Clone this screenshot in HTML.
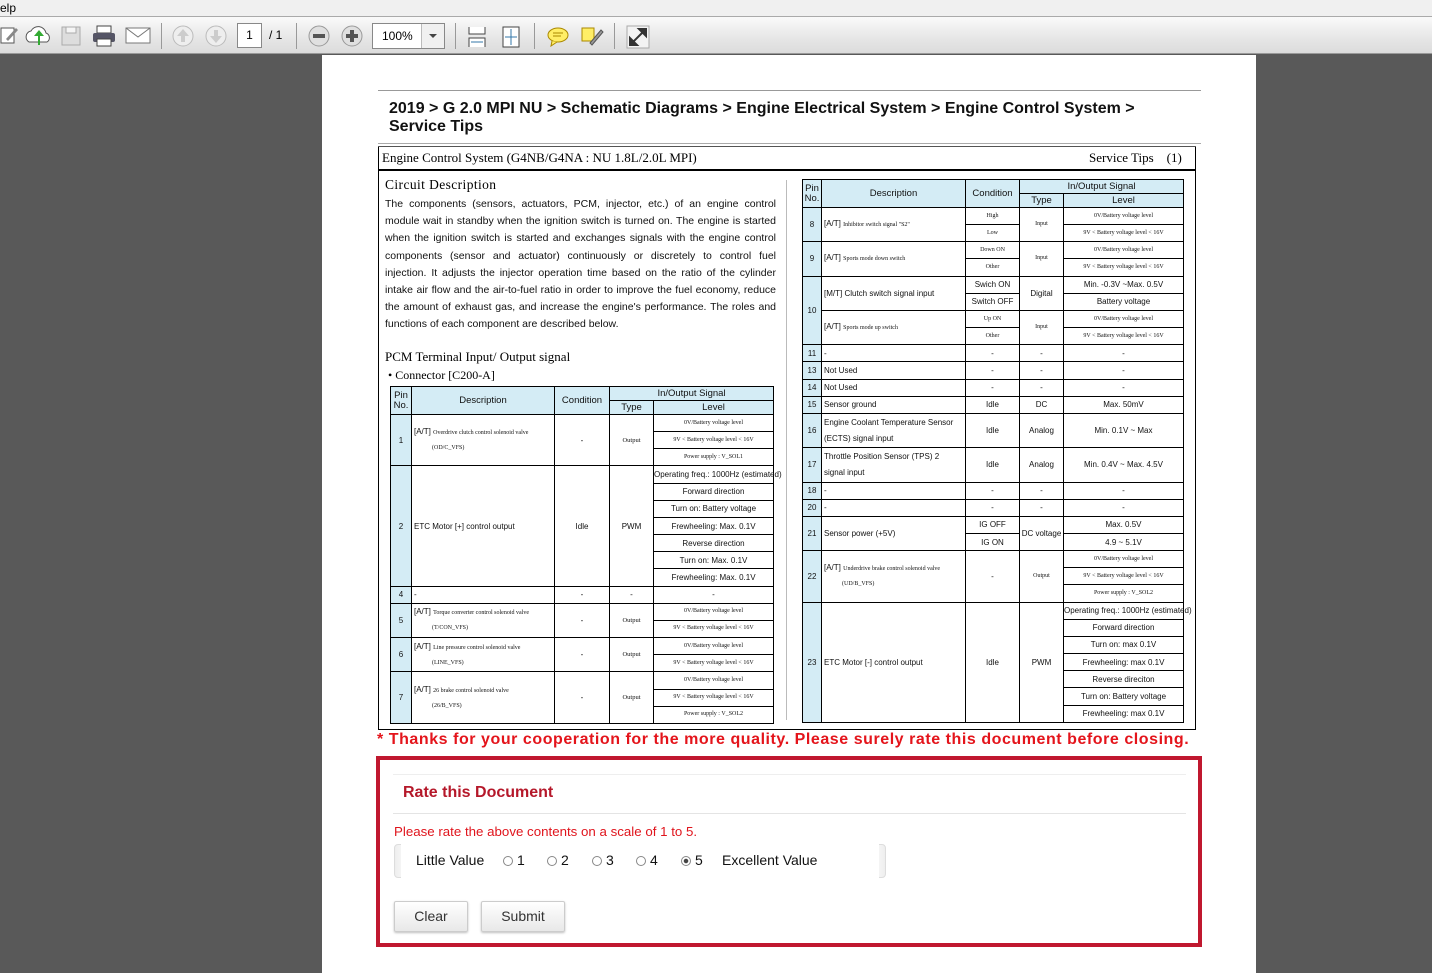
<!DOCTYPE html>
<html><head><meta charset="utf-8"><style>
*{box-sizing:border-box;margin:0;padding:0}
body{width:1432px;height:973px;overflow:hidden;background:#595959;font-family:"Liberation Sans",sans-serif;position:relative}
.menu{position:absolute;left:0;top:0;width:1432px;height:17px;background:#f0f0f0;font-size:12px;line-height:16px;border-bottom:1px solid #aaa}
.tb{position:absolute;left:0;top:17px;width:1432px;height:37px;background:linear-gradient(#fafafa,#e6e6e6 60%,#dcdcdc);border-bottom:1px solid #999}
.ic{position:absolute;top:8px}
.sep{position:absolute;top:6px;width:1px;height:26px;background:#999}
.page{position:absolute;left:322px;top:55px;width:934px;height:918px;background:#fff}
.abs{position:absolute}
table{border-collapse:collapse;table-layout:fixed;position:absolute}
td{border:1px solid #000;text-align:center;vertical-align:middle;font-size:8px;color:#111;overflow:visible;white-space:nowrap;padding:0;line-height:9px}
tr{height:17.17px}
tr.h{height:14px}
td.hd{background:#d4ecf5;font-size:9.5px}
td.p{background:#d4ecf5}
td.l{text-align:left;padding-left:2px}
td.two{line-height:14px}
.s{font-family:"Liberation Serif",serif;font-size:6.5px}
.sd{font-family:"Liberation Serif",serif;font-size:6px}
.btn{position:absolute;top:141px;height:31px;border:1px solid #ccc;border-radius:2px;background:linear-gradient(#fff,#e8e8e8);box-shadow:0 1px 2px rgba(0,0,0,.25);font-size:14px;line-height:29px;text-align:center;color:#333}
.rad{position:absolute;top:99px;width:10px;height:10px;border:1px solid #888;border-radius:50%;background:#fff}
.rl{position:absolute;top:94px;font-size:14px;color:#111;line-height:18px;white-space:nowrap}
</style></head><body>
<div class="menu">elp</div>
<div class="tb">
 <svg class="ic" style="left:0" width="18" height="20"><rect x="1" y="3" width="13" height="15" fill="#fff" stroke="#555"/><path d="M6 14 L16 3 L18 5 L8 16Z" fill="#888"/></svg>
 <svg class="ic" style="left:25" width="26" height="22"><path d="M4 17 a6 6 0 0 1 2-11 a8 8 0 0 1 15 2 a5 5 0 0 1 1 9z" fill="#fff" stroke="#555"/><path d="M13 20 V11 H9 L14 5 L19 11 H15 V20z" fill="#3a3"/></svg>
 <svg class="ic" style="left:60" width="22" height="22"><rect x="2" y="2" width="18" height="18" fill="#ddd" stroke="#aaa"/><rect x="6" y="2" width="10" height="6" fill="#f5f5f5" stroke="#aaa"/></svg>
 <svg class="ic" style="left:92" width="24" height="22"><rect x="5" y="1" width="14" height="7" fill="#fff" stroke="#444"/><rect x="1" y="8" width="22" height="9" rx="2" fill="#556"/><rect x="5" y="14" width="14" height="7" fill="#fff" stroke="#444"/></svg>
 <svg class="ic" style="left:125" width="26" height="20"><rect x="1" y="3" width="24" height="15" fill="#fff" stroke="#777"/><path d="M1 3 L13 12 L25 3" fill="none" stroke="#777"/></svg>
 <div class="sep" style="left:161px"></div>
 <svg class="ic" style="left:171" width="24" height="24"><circle cx="12" cy="11" r="10" fill="#eee" stroke="#bbb"/><path d="M12 4 L18 11 H14 V17 H10 V11 H6Z" fill="#ccc"/></svg>
 <svg class="ic" style="left:204" width="24" height="24"><circle cx="12" cy="11" r="10" fill="#eee" stroke="#bbb"/><path d="M12 18 L18 11 H14 V5 H10 V11 H6Z" fill="#ccc"/></svg>
 <div class="abs" style="left:237px;top:6px;width:25px;height:25px;background:#fff;border:1px solid #888;font-size:12px;line-height:23px;text-align:center">1</div>
 <div class="abs" style="left:269px;top:11px;font-size:12px">/ 1</div>
 <div class="sep" style="left:296px"></div>
 <svg class="ic" style="left:307" width="24" height="24"><circle cx="12" cy="11" r="10" fill="#e0e0e0" stroke="#999"/><rect x="6" y="9" width="12" height="4" fill="#555"/></svg>
 <svg class="ic" style="left:340" width="24" height="24"><circle cx="12" cy="11" r="10" fill="#e0e0e0" stroke="#999"/><rect x="6" y="9" width="12" height="4" fill="#555"/><rect x="10" y="5" width="4" height="12" fill="#555"/></svg>
 <div class="abs" style="left:372px;top:6px;width:73px;height:26px;background:#fff;border:1px solid #888;font-size:12px;line-height:24px;padding-left:9px">100%</div>
 <div class="abs" style="left:421px;top:7px;width:23px;height:24px;border-left:1px solid #bbb;background:#f0f0f0"><div style="margin:10px 7px;width:0;height:0;border-left:4px solid transparent;border-right:4px solid transparent;border-top:4px solid #444"></div></div>
 <div class="sep" style="left:455px"></div>
 <svg class="ic" style="left:467" width="20" height="24"><path d="M2 2 V9 H18 V2 M2 22 V13 H18 V22" fill="#fff" stroke="#444"/><path d="M4 17 H16" stroke="#37a"/></svg>
 <svg class="ic" style="left:501" width="20" height="24"><rect x="2" y="2" width="16" height="20" fill="#fff" stroke="#444"/><path d="M10 4 V20 M4 12 H16" stroke="#37a"/></svg>
 <div class="sep" style="left:534px"></div>
 <svg class="ic" style="left:546" width="24" height="22"><ellipse cx="12" cy="10" rx="10" ry="7" fill="#fe6" stroke="#a80"/><path d="M6 16 L5 21 L11 17" fill="#fe6" stroke="#a80"/><path d="M7 8 H17 M7 11 H15" stroke="#a80"/></svg>
 <svg class="ic" style="left:580" width="24" height="22"><rect x="2" y="3" width="12" height="13" fill="#fe6" stroke="#a80"/><path d="M10 18 L21 5 L23 7 L12 20Z" fill="#999" stroke="#555"/></svg>
 <div class="sep" style="left:614px"></div>
 <svg class="ic" style="left:626" width="24" height="24"><rect x="1" y="1" width="22" height="22" fill="#f3f3f3" stroke="#aaa"/><path d="M13 4 H20 V11 Z M11 20 H4 V13Z M8 16 L16 8" fill="#333" stroke="#333" stroke-width="2"/></svg>
</div>

<div class="page"></div>
<div class="abs" style="left:378px;top:90px;width:823px;height:1px;background:#999"></div>
<div class="abs" style="left:389px;top:100px;font-size:16px;font-weight:bold;line-height:18px;color:#111">2019 &gt; G 2.0 MPI NU &gt; Schematic Diagrams &gt; Engine Electrical System &gt; Engine Control System &gt;<br>Service Tips</div>
<div class="abs" style="left:378px;top:143px;width:823px;height:1px;background:#aaa"></div>

<div class="abs" style="left:378px;top:146px;width:818px;height:584px;border:1px solid #000;border-top:none"></div>
<div class="abs" style="left:378px;top:146px;width:818px;height:1px;background:#555"></div>
<div class="abs" style="left:382px;top:150px;font-family:'Liberation Serif',serif;font-size:13px">Engine Control System (G4NB/G4NA : NU 1.8L/2.0L MPI)</div>
<div class="abs" style="left:1089px;top:150px;font-family:'Liberation Serif',serif;font-size:13px">Service Tips&nbsp;&nbsp;&nbsp;&nbsp;(1)</div>
<div class="abs" style="left:378px;top:169px;width:818px;height:2px;background:#000"></div>
<div class="abs" style="left:786px;top:180px;width:1px;height:540px;background:#bbb"></div>

<div class="abs" style="left:385px;top:177px;font-family:'Liberation Serif',serif;font-size:13.5px;letter-spacing:.4px">Circuit Description</div>
<div class="abs" style="left:385px;top:196px;width:391px;font-size:10.5px;line-height:17.2px;text-align:justify;color:#111">The components (sensors, actuators, PCM, injector, etc.) of an engine control module wait in standby when the ignition switch is turned on. The engine is started when the ignition switch is started and exchanges signals with the engine control components (sensor and actuator) continuously or discretely to control fuel injection. It adjusts the injector operation time based on the ratio of the cylinder intake air flow and the air-to-fuel ratio in order to improve the fuel economy, reduce the amount of exhaust gas, and increase the engine's performance. The roles and functions of each component are described below.</div>
<div class="abs" style="left:385px;top:349px;font-family:'Liberation Serif',serif;font-size:13px">PCM Terminal Input/ Output signal</div>
<div class="abs" style="left:388px;top:368px;font-family:'Liberation Serif',serif;font-size:12px">• Connector [C200-A]</div>

<table style="left:390px;top:386px;width:383px">
<colgroup><col style="width:21px"><col style="width:143px"><col style="width:55px"><col style="width:44px"><col style="width:120px"></colgroup>
<tr class="h"><td class="hd" rowspan="2" style="line-height:10px">Pin<br>No.</td><td class="hd" rowspan="2">Description</td><td class="hd" rowspan="2">Condition</td><td class="hd" colspan="2">In/Output Signal</td></tr>
<tr class="h"><td class="hd">Type</td><td class="hd">Level</td></tr>
<tr><td class="p" rowspan="3">1</td><td class="l two" rowspan="3">[A/T] <span class="sd">Overdrive clutch control solenoid valve</span><br><span class="sd" style="padding-left:18px">(OD/C_VFS)</span></td><td rowspan="3">-</td><td rowspan="3" class="s">Output</td><td class="sd">0V/Battery voltage level</td></tr>
<tr><td class="sd">9V &lt; Battery voltage level &lt; 16V</td></tr>
<tr><td class="sd">Power supply : V_SOL1</td></tr>
<tr><td class="p" rowspan="7">2</td><td class="l" rowspan="7">ETC Motor [+] control output</td><td rowspan="7">Idle</td><td rowspan="7">PWM</td><td>Operating freq.: 1000Hz (estimated)</td></tr>
<tr><td>Forward direction</td></tr><tr><td>Turn on: Battery voltage</td></tr><tr><td>Frewheeling: Max. 0.1V</td></tr><tr><td>Reverse direction</td></tr><tr><td>Turn on: Max. 0.1V</td></tr><tr><td>Frewheeling: Max. 0.1V</td></tr>
<tr><td class="p">4</td><td class="l">-</td><td>-</td><td>-</td><td>-</td></tr>
<tr><td class="p" rowspan="2">5</td><td class="l two" rowspan="2">[A/T] <span class="sd">Torque converter control solenoid valve</span><br><span class="sd" style="padding-left:18px">(T/CON_VFS)</span></td><td rowspan="2">-</td><td rowspan="2" class="s">Output</td><td class="sd">0V/Battery voltage level</td></tr>
<tr><td class="sd">9V &lt; Battery voltage level &lt; 16V</td></tr>
<tr><td class="p" rowspan="2">6</td><td class="l two" rowspan="2">[A/T] <span class="sd">Line pressure control solenoid valve</span><br><span class="sd" style="padding-left:18px">(LINE_VFS)</span></td><td rowspan="2">-</td><td rowspan="2" class="s">Output</td><td class="sd">0V/Battery voltage level</td></tr>
<tr><td class="sd">9V &lt; Battery voltage level &lt; 16V</td></tr>
<tr><td class="p" rowspan="3">7</td><td class="l two" rowspan="3">[A/T] <span class="sd">26 brake control solenoid valve</span><br><span class="sd" style="padding-left:18px">(26/B_VFS)</span></td><td rowspan="3">-</td><td rowspan="3" class="s">Output</td><td class="sd">0V/Battery voltage level</td></tr>
<tr><td class="sd">9V &lt; Battery voltage level &lt; 16V</td></tr>
<tr><td class="sd">Power supply : V_SOL2</td></tr>
</table>

<table style="left:802px;top:179px;width:381px">
<colgroup><col style="width:19px"><col style="width:144px"><col style="width:54px"><col style="width:44px"><col style="width:120px"></colgroup>
<tr class="h"><td class="hd" rowspan="2" style="line-height:10px">Pin<br>No.</td><td class="hd" rowspan="2">Description</td><td class="hd" rowspan="2">Condition</td><td class="hd" colspan="2">In/Output Signal</td></tr>
<tr class="h"><td class="hd">Type</td><td class="hd">Level</td></tr>
<tr><td class="p" rowspan="2">8</td><td class="l" rowspan="2">[A/T] <span class="sd">Inhibitor switch signal "S2"</span></td><td class="sd">High</td><td rowspan="2" class="sd">Input</td><td class="sd">0V/Battery voltage level</td></tr>
<tr><td class="sd">Low</td><td class="sd">9V &lt; Battery voltage level &lt; 16V</td></tr>
<tr><td class="p" rowspan="2">9</td><td class="l" rowspan="2">[A/T] <span class="sd">Sports mode down switch</span></td><td class="sd">Down ON</td><td rowspan="2" class="sd">Input</td><td class="sd">0V/Battery voltage level</td></tr>
<tr><td class="sd">Other</td><td class="sd">9V &lt; Battery voltage level &lt; 16V</td></tr>
<tr><td class="p" rowspan="4">10</td><td class="l" rowspan="2">[M/T] Clutch switch signal input</td><td>Swich ON</td><td rowspan="2">Digital</td><td>Min. -0.3V ~Max. 0.5V</td></tr>
<tr><td>Switch OFF</td><td>Battery voltage</td></tr>
<tr><td class="l" rowspan="2">[A/T] <span class="sd">Sports mode up switch</span></td><td class="sd">Up ON</td><td rowspan="2" class="sd">Input</td><td class="sd">0V/Battery voltage level</td></tr>
<tr><td class="sd">Other</td><td class="sd">9V &lt; Battery voltage level &lt; 16V</td></tr>
<tr><td class="p">11</td><td class="l">-</td><td>-</td><td>-</td><td>-</td></tr>
<tr><td class="p">13</td><td class="l">Not Used</td><td>-</td><td>-</td><td>-</td></tr>
<tr><td class="p">14</td><td class="l">Not Used</td><td>-</td><td>-</td><td>-</td></tr>
<tr><td class="p">15</td><td class="l">Sensor ground</td><td>Idle</td><td>DC</td><td>Max. 50mV</td></tr>
<tr><td class="p" rowspan="2">16</td><td class="l two" rowspan="2" style="line-height:16px">Engine Coolant Temperature Sensor<br>(ECTS) signal input</td><td rowspan="2">Idle</td><td rowspan="2">Analog</td><td rowspan="2">Min. 0.1V ~ Max</td></tr><tr></tr>
<tr><td class="p" rowspan="2">17</td><td class="l two" rowspan="2" style="line-height:16px">Throttle Position Sensor (TPS) 2<br>signal input</td><td rowspan="2">Idle</td><td rowspan="2">Analog</td><td rowspan="2">Min. 0.4V ~ Max. 4.5V</td></tr><tr></tr>
<tr><td class="p">18</td><td class="l">-</td><td>-</td><td>-</td><td>-</td></tr>
<tr><td class="p">20</td><td class="l">-</td><td>-</td><td>-</td><td>-</td></tr>
<tr><td class="p" rowspan="2">21</td><td class="l" rowspan="2">Sensor power (+5V)</td><td>IG OFF</td><td rowspan="2">DC voltage</td><td>Max. 0.5V</td></tr>
<tr><td>IG ON</td><td>4.9 ~ 5.1V</td></tr>
<tr><td class="p" rowspan="3">22</td><td class="l two" rowspan="3">[A/T] <span class="sd">Underdrive brake control solenoid valve</span><br><span class="sd" style="padding-left:18px">(UD/B_VFS)</span></td><td rowspan="3">-</td><td rowspan="3" class="sd">Output</td><td class="sd">0V/Battery voltage level</td></tr>
<tr><td class="sd">9V &lt; Battery voltage level &lt; 16V</td></tr>
<tr><td class="sd">Power supply : V_SOL2</td></tr>
<tr><td class="p" rowspan="7">23</td><td class="l" rowspan="7">ETC Motor [-] control output</td><td rowspan="7">Idle</td><td rowspan="7">PWM</td><td>Operating freq.: 1000Hz (estimated)</td></tr>
<tr><td>Forward direction</td></tr><tr><td>Turn on: max 0.1V</td></tr><tr><td>Frewheeling: max 0.1V</td></tr><tr><td>Reverse direciton</td></tr><tr><td>Turn on: Battery voltage</td></tr><tr><td>Frewheeling: max 0.1V</td></tr>
</table>

<div class="abs" style="left:377px;top:731px;font-size:16px;font-weight:bold;color:#e4141b;letter-spacing:.55px;white-space:nowrap">* Thanks for your cooperation for the more quality. Please surely rate this document before closing.</div>

<div class="abs" style="left:376px;top:756px;width:826px;height:191px;border:4px solid #c0182f;background:#fff">
 <div class="abs" style="left:13px;top:14px;width:793px;height:1px;background:#eee"></div>
 <div class="abs" style="left:23px;top:24px;font-size:16px;font-weight:bold;color:#b5182a">Rate this Document</div>
 <div class="abs" style="left:13px;top:53px;width:793px;height:1px;background:#e4e4e4"></div>
 <div class="abs" style="left:14px;top:64px;font-size:13.3px;color:#e0141c">Please rate the above contents on a scale of 1 to 5.</div>
 <div class="abs" style="left:14px;top:84px;width:492px;height:34px;border:1px solid #ddd;border-radius:4px;background:linear-gradient(90deg,#eee,#fff 3%,#fff 97%,#eee)"></div>
 <div class="abs" style="left:21px;top:84px;width:478px;height:34px;background:#fff"></div>
 <div class="rl" style="left:36px;top:91px">Little Value</div>
 <div class="rad" style="left:123px;top:96px"></div><div class="rl" style="left:137px;top:91px">1</div>
 <div class="rad" style="left:167px;top:96px"></div><div class="rl" style="left:181px;top:91px">2</div>
 <div class="rad" style="left:212px;top:96px"></div><div class="rl" style="left:226px;top:91px">3</div>
 <div class="rad" style="left:256px;top:96px"></div><div class="rl" style="left:270px;top:91px">4</div>
 <div class="rad" style="left:301px;top:96px;background:radial-gradient(#444 35%,#fff 45%)"></div><div class="rl" style="left:315px;top:91px">5</div>
 <div class="rl" style="left:342px;top:91px">Excellent Value</div>
 <div class="btn" style="left:14px;width:74px">Clear</div>
 <div class="btn" style="left:101px;width:84px">Submit</div>
</div>
</body></html>
